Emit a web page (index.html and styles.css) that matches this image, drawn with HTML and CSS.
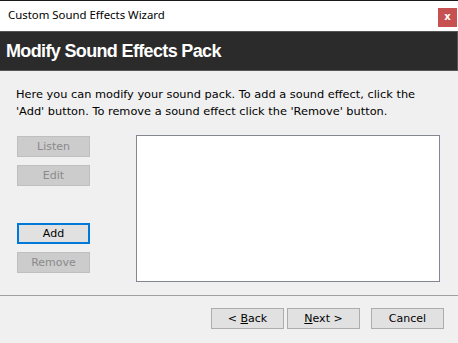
FILE: index.html
```html
<!DOCTYPE html>
<html>
<head>
<meta charset="utf-8">
<link rel="stylesheet" href="styles.css">
</head>
<body>
<div class="window">
  <div class="titlebar">
    <span class="title">Custom Sound Effects Wizard</span>
    <span class="close">x</span>
  </div>
  <div class="header">Modify Sound Effects Pack</div>
  <div class="content">
    <p class="intro">Here you can modify your sound pack. To add a sound effect, click the<br>'Add' button. To remove a sound effect click the 'Remove' button.</p>
    <div class="main">
      <div class="side">
        <button class="btn disabled">Listen</button>
        <button class="btn disabled">Edit</button>
        <button class="btn focused add">Add</button>
        <button class="btn disabled">Remove</button>
      </div>
      <div class="listbox"></div>
    </div>
  </div>
  <div class="separator"></div>
  <div class="footer">
    <button class="btn"><span>&lt; <u>B</u>ack</span></button>
    <button class="btn"><span><u>N</u>ext &gt;</span></button>
    <button class="btn cancel">Cancel</button>
  </div>
</div>
</body>
</html>
```
FILE: styles.css
```css
html, body {
  margin: 0;
  padding: 0;
  background: #f0f0f0;
}
.window {
  width: 458px;
  height: 343px;
  background: #f0f0f0;
  display: flex;
  flex-direction: column;
  overflow: hidden;
}
.titlebar {
  height: 30px;
  border-top: 1px solid #1a1a1a;
  background: #ffffff;
  display: flex;
  align-items: flex-start;
  justify-content: space-between;
}
.title {
  font-family: "Noto Sans", sans-serif;
  font-size: 11.4px;
  color: #000;
  margin-left: 8px;
  margin-top: 6px;
  line-height: 16px;
}
.close {
  width: 19px;
  height: 19px;
  margin-top: 7px;
  margin-right: 1px;
  background: #c75050;
  color: #fff;
  font-family: "DejaVu Sans", sans-serif;
  font-weight: bold;
  font-size: 10px;
  line-height: 17px;
  text-align: center;
}
.header {
  height: 38px;
  background: #2b2b2b;
  border-top: 1px solid #555555;
  border-bottom: 1px solid #555555;
  border-right: 1px solid #555555;
  color: #ffffff;
  font-family: "Liberation Sans", Arial, sans-serif;
  font-weight: bold;
  font-size: 18px;
  letter-spacing: -0.65px;
  line-height: 38px;
  padding-left: 6px;
}
.content {
  padding: 0 0 0 16px;
}
.intro {
  margin: 15px 0 0 0;
  font-family: "DejaVu Sans", sans-serif;
  font-size: 11.35px;
  line-height: 17px;
  color: #000;
  white-space: nowrap;
}
.main {
  display: flex;
  margin-top: 15px;
}
.side {
  display: flex;
  flex-direction: column;
  width: 73px;
  margin-left: 1px;
  margin-top: 1px;
}
.btn {
  box-sizing: border-box;
  width: 73px;
  height: 21px;
  padding: 0;
  margin: 0;
  background: #e1e1e1;
  border: 1px solid #adadad;
  font-family: "DejaVu Sans", sans-serif;
  font-size: 11px;
  color: #000;
  text-align: center;
}
.side .btn + .btn {
  margin-top: 8px;
}
.side .btn.add {
  margin-top: 37px;
}
.btn.disabled {
  background: #cccccc;
  border-color: #bfbfbf;
  color: #8a8a8a;
}
.btn.focused {
  border: 2px solid #0078d7;
  height: 21px;
}
.listbox {
  box-sizing: border-box;
  margin-left: 46px;
  width: 304px;
  height: 147px;
  background: #ffffff;
  border: 1px solid #828790;
}
.separator {
  margin-top: 13px;
  height: 1px;
  background: #a0a0a0;
}
.footer {
  display: flex;
  padding-left: 211px;
  margin-top: 12px;
}
.footer .btn {
  height: 21px;
}
.footer .btn + .btn {
  margin-left: 3px;
}
.footer .btn.cancel {
  margin-left: 11px;
}
```
